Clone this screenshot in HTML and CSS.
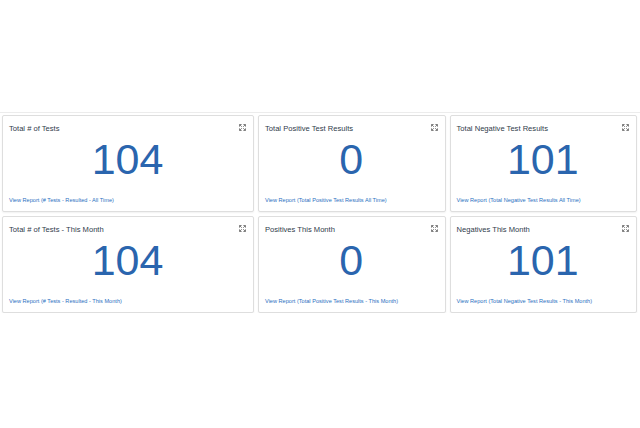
FILE: index.html
```html
<!DOCTYPE html>
<html lang="en">

<head>
  <meta charset="UTF-8">
  <meta name="viewport" content="width=device-width, initial-scale=1.0">
  <title>Test Results Dashboard</title>
  <link rel="stylesheet" href="styles.css">
</head>

<body>
  <div class="dashboard">
    <div class="grid">
      <div class="card">
        <div class="card-head">
          <span class="card-title">Total # of Tests</span>
          <svg class="expand" viewBox="0 0 8 8"><path d="M0.6 0.6h2.4M0.6 0.6v2.4M0.6 0.6l2.6 2.6M7.4 0.6h-2.4M7.4 0.6v2.4M7.4 0.6l-2.6 2.6M0.6 7.4h2.4M0.6 7.4v-2.4M0.6 7.4l2.6-2.6M7.4 7.4h-2.4M7.4 7.4v-2.4M7.4 7.4l-2.6-2.6"/></svg>
        </div>
        <div class="card-value">104</div>
        <a class="card-link" href="#">View Report (# Tests - Resulted - All Time)</a>
      </div>
      <div class="card">
        <div class="card-head">
          <span class="card-title">Total Positive Test Results</span>
          <svg class="expand" viewBox="0 0 8 8"><path d="M0.6 0.6h2.4M0.6 0.6v2.4M0.6 0.6l2.6 2.6M7.4 0.6h-2.4M7.4 0.6v2.4M7.4 0.6l-2.6 2.6M0.6 7.4h2.4M0.6 7.4v-2.4M0.6 7.4l2.6-2.6M7.4 7.4h-2.4M7.4 7.4v-2.4M7.4 7.4l-2.6-2.6"/></svg>
        </div>
        <div class="card-value">0</div>
        <a class="card-link" href="#">View Report (Total Positive Test Results All Time)</a>
      </div>
      <div class="card">
        <div class="card-head">
          <span class="card-title">Total Negative Test Results</span>
          <svg class="expand" viewBox="0 0 8 8"><path d="M0.6 0.6h2.4M0.6 0.6v2.4M0.6 0.6l2.6 2.6M7.4 0.6h-2.4M7.4 0.6v2.4M7.4 0.6l-2.6 2.6M0.6 7.4h2.4M0.6 7.4v-2.4M0.6 7.4l2.6-2.6M7.4 7.4h-2.4M7.4 7.4v-2.4M7.4 7.4l-2.6-2.6"/></svg>
        </div>
        <div class="card-value">101</div>
        <a class="card-link" href="#">View Report (Total Negative Test Results All Time)</a>
      </div>
      <div class="card">
        <div class="card-head">
          <span class="card-title">Total # of Tests - This Month</span>
          <svg class="expand" viewBox="0 0 8 8"><path d="M0.6 0.6h2.4M0.6 0.6v2.4M0.6 0.6l2.6 2.6M7.4 0.6h-2.4M7.4 0.6v2.4M7.4 0.6l-2.6 2.6M0.6 7.4h2.4M0.6 7.4v-2.4M0.6 7.4l2.6-2.6M7.4 7.4h-2.4M7.4 7.4v-2.4M7.4 7.4l-2.6-2.6"/></svg>
        </div>
        <div class="card-value">104</div>
        <a class="card-link" href="#">View Report (# Tests - Resulted - This Month)</a>
      </div>
      <div class="card">
        <div class="card-head">
          <span class="card-title">Positives This Month</span>
          <svg class="expand" viewBox="0 0 8 8"><path d="M0.6 0.6h2.4M0.6 0.6v2.4M0.6 0.6l2.6 2.6M7.4 0.6h-2.4M7.4 0.6v2.4M7.4 0.6l-2.6 2.6M0.6 7.4h2.4M0.6 7.4v-2.4M0.6 7.4l2.6-2.6M7.4 7.4h-2.4M7.4 7.4v-2.4M7.4 7.4l-2.6-2.6"/></svg>
        </div>
        <div class="card-value">0</div>
        <a class="card-link" href="#">View Report (Total Positive Test Results - This Month)</a>
      </div>
      <div class="card">
        <div class="card-head">
          <span class="card-title">Negatives This Month</span>
          <svg class="expand" viewBox="0 0 8 8"><path d="M0.6 0.6h2.4M0.6 0.6v2.4M0.6 0.6l2.6 2.6M7.4 0.6h-2.4M7.4 0.6v2.4M7.4 0.6l-2.6 2.6M0.6 7.4h2.4M0.6 7.4v-2.4M0.6 7.4l2.6-2.6M7.4 7.4h-2.4M7.4 7.4v-2.4M7.4 7.4l-2.6-2.6"/></svg>
        </div>
        <div class="card-value">101</div>
        <a class="card-link" href="#">View Report (Total Negative Test Results - This Month)</a>
      </div>
    </div>
  </div>
</body>

</html>
```

FILE: styles.css
```css
body {
  font-family: 'Liberation Sans', Arial, sans-serif;
  margin: 0;
  padding: 0;
  background-color: #fff;
}

.dashboard {
  margin-top: 112px;
  border-top: 1px solid #ececec;
  padding: 2px 3px 0 2px;
}

.grid {
  display: grid;
  grid-template-columns: 252px 1fr 1fr;
  grid-auto-rows: 97px;
  row-gap: 4px;
  column-gap: 4px;
}

.card {
  display: flex;
  flex-direction: column;
  padding: 7px 7px 6px 6px;
  border: 1px solid #dedede;
  border-radius: 2px;
  box-shadow: 0 1px 2px rgba(0, 0, 0, 0.06);
  background-color: #fff;
  box-sizing: border-box;
}

.card-head {
  display: flex;
  justify-content: space-between;
  align-items: flex-start;
  height: 12px;
}

.card-title {
  font-size: 7.6px;
  line-height: 12px;
  color: #2f3b4b;
}

.expand {
  width: 7px;
  height: 7px;
  margin-top: 1px;
  fill: none;
  stroke: #7a7a7a;
  stroke-width: 1.1;
}

.card-value {
  margin-top: 2px;
  font-size: 43px;
  line-height: 44px;
  text-align: center;
  color: #2a65ae;
}

.card-link {
  margin-top: auto;
  font-size: 5.6px;
  line-height: 9px;
  color: #2a6fc1;
  text-decoration: none;
}
```
